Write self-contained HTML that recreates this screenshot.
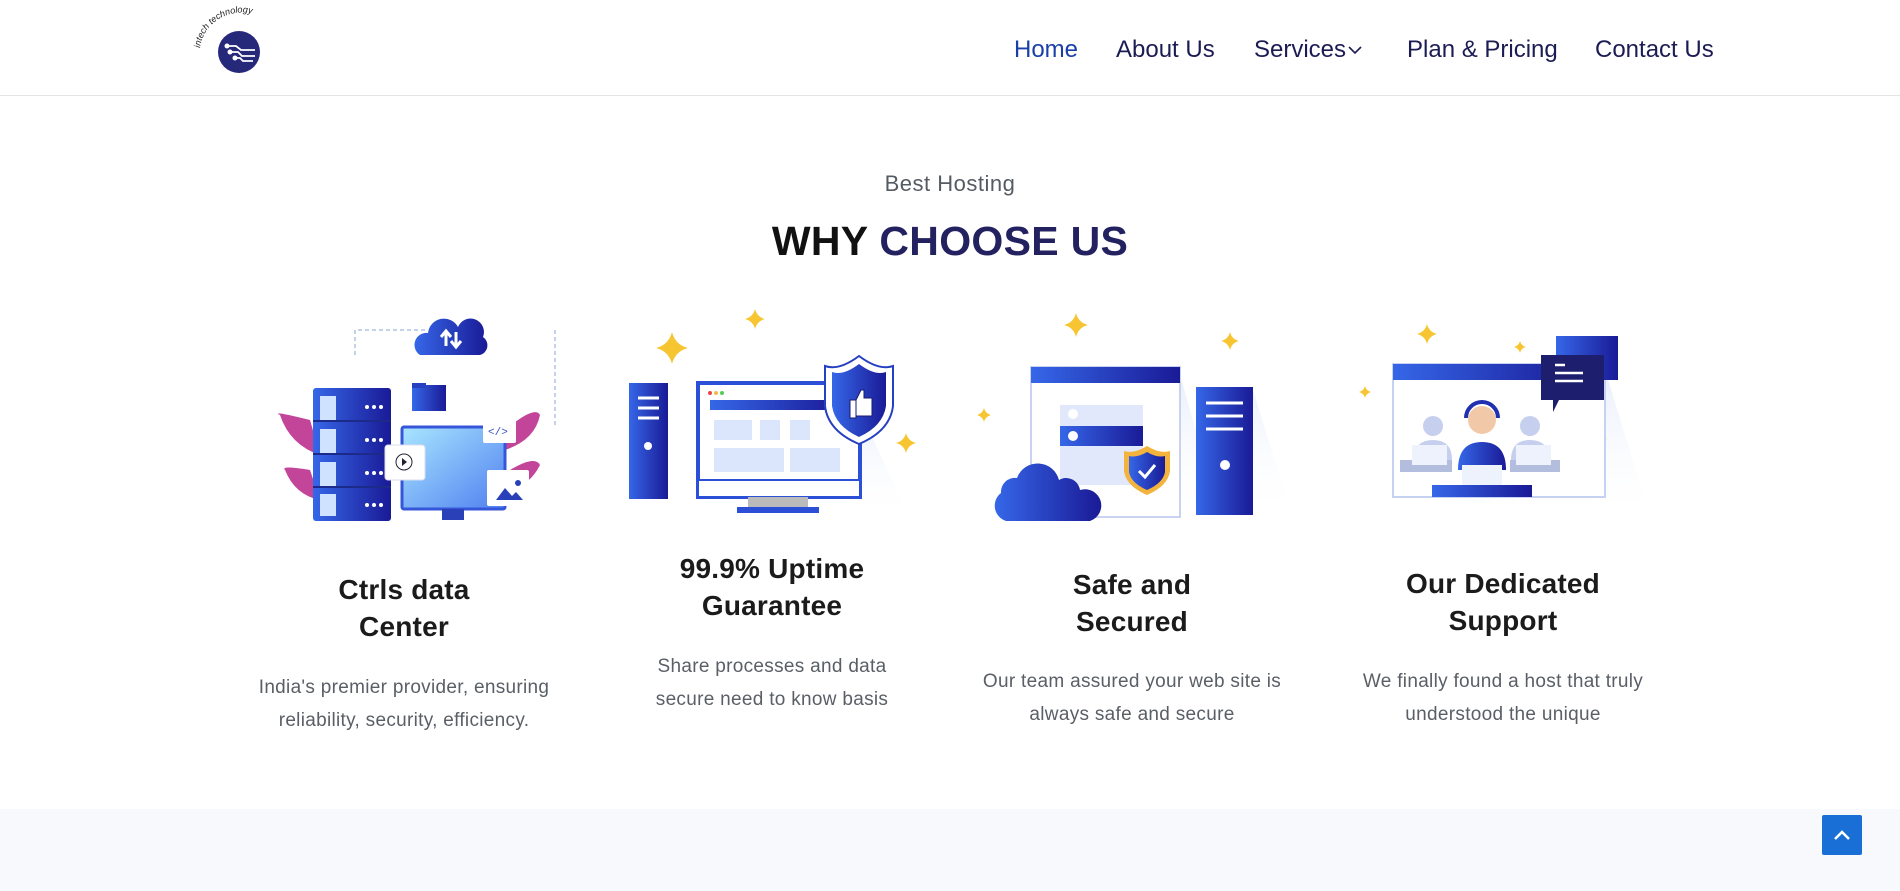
<!DOCTYPE html>
<html><head><meta charset="utf-8"><style>
*{margin:0;padding:0;box-sizing:border-box}
body{width:1900px;height:891px;overflow:hidden;background:#fff;font-family:"Liberation Sans",sans-serif;position:relative}
.hdr{position:absolute;left:0;top:0;width:1900px;height:96px;border-bottom:1px solid #e4e4e4;background:#fff}
.nav a{position:absolute;top:36px;font-size:24px;color:#1c1c54;text-decoration:none;white-space:nowrap}
.t{position:absolute;text-align:center;transform:translateX(-50%);white-space:nowrap}
.h{font-size:28px;font-weight:bold;color:#1b1b1b;line-height:37px;letter-spacing:0.2px}
.d{font-size:19px;color:#5a5f66;line-height:33px;letter-spacing:0.3px}
.bot{position:absolute;left:0;top:809px;width:1900px;height:82px;background:#f8f9fd}
.up{position:absolute;left:1822px;top:815px;width:40px;height:40px;background:#1a6fd6;border-radius:2px}
</style></head><body>
<div class="hdr">
<svg width="120" height="90" style="position:absolute;left:190px;top:5px" viewBox="190 5 120 90">
<defs><path id="arc" d="M200,48 A42,40 0 0 1 280,36"/></defs>
<text font-size="9" font-family="Liberation Sans" font-style="italic" fill="#222"><textPath href="#arc">intech technology</textPath></text>
<circle cx="239" cy="52" r="21" fill="#26287a"/>
<path d="M226,46h10l5,4h14M229,52h9l4,4h13M234,58h6l3,3h10" stroke="#fff" stroke-width="1.8" fill="none"/>
<circle cx="227" cy="46" r="2.5" fill="#fff"/><circle cx="230" cy="52" r="2.5" fill="#fff"/><circle cx="235" cy="58" r="2.5" fill="#fff"/>
</svg>
<div class="nav">
<a style="left:1014px;color:#1a3fa8">Home</a>
<a style="left:1116px">About Us</a>
<a style="left:1254px">Services</a>
<svg style="position:absolute;left:1348px;top:45px" width="14" height="10"><path d="M1,2l6,6l6,-6" stroke="#1c1c54" stroke-width="1.6" fill="none"/></svg>
<a style="left:1407px">Plan &amp; Pricing</a>
<a style="left:1595px">Contact Us</a>
</div>
</div>

<div class="t" style="left:950px;top:171px;font-size:22px;color:#555b62;letter-spacing:0.5px">Best Hosting</div>
<div class="t" style="left:950px;top:218px;font-size:41px;font-weight:bold;color:#111;letter-spacing:0.3px">WHY <span style="color:#23215f">CHOOSE US</span></div>

<svg width="1900" height="891" style="position:absolute;left:0;top:0" viewBox="0 0 1900 891">
<defs>
<linearGradient id="b" x1="0" y1="0" x2="1" y2="0"><stop offset="0" stop-color="#3567e8"/><stop offset="1" stop-color="#1a1a96"/></linearGradient>
<linearGradient id="lb" x1="0" y1="0" x2="1" y2="1"><stop offset="0" stop-color="#a9e6ff"/><stop offset="1" stop-color="#4f7ff0"/></linearGradient>
<linearGradient id="sh" x1="0" y1="0" x2="0" y2="1"><stop offset="0" stop-color="#e8eefc"/><stop offset="1" stop-color="#fff" stop-opacity="0"/></linearGradient>
<path id="star" d="M0,-10 Q2,-2 10,0 Q2,2 0,10 Q-2,2 -10,0 Q-2,-2 0,-10Z" fill="#f7c531"/>
</defs>
<path d="M355,355V330h70M555,330V425" stroke="#8aa4d8" stroke-dasharray="4 3" fill="none"/>
<path d="M310,420q-40,-10 -30,-5q10,30 40,40z" fill="#c2459a"/>
<path d="M310,470q-30,-5 -25,0q10,25 35,30z" fill="#c2459a"/>
<path d="M505,430q30,-25 35,-15q-5,25 -35,35z" fill="#c2459a"/>
<path d="M510,470q25,-15 30,-5q-10,20 -30,25z" fill="#c2459a"/>
<rect x="313" y="388" width="78" height="133" rx="3" fill="url(#b)"/>
<g fill="#cfe2ff"><rect x="320" y="396" width="16" height="25"/><rect x="320" y="429" width="16" height="25"/><rect x="320" y="462" width="16" height="25"/><rect x="320" y="494" width="16" height="22"/></g>
<g stroke="#1c2a8a" stroke-width="2"><path d="M313,421h78M313,454h78M313,487h78"/></g>
<g fill="#fff"><circle cx="367" cy="407" r="2"/><circle cx="374" cy="407" r="2"/><circle cx="381" cy="407" r="2"/><circle cx="367" cy="440" r="2"/><circle cx="374" cy="440" r="2"/><circle cx="381" cy="440" r="2"/><circle cx="367" cy="473" r="2"/><circle cx="374" cy="473" r="2"/><circle cx="381" cy="473" r="2"/><circle cx="367" cy="505" r="2"/><circle cx="374" cy="505" r="2"/><circle cx="381" cy="505" r="2"/></g>
<path d="M420,355a12,12 0 0 1 8,-22a16,16 0 0 1 30,-6a12,12 0 0 1 25,10a10,10 0 0 1 -3,18z" fill="url(#b)"/>
<path d="M446,332v14M441,337l5,-6l5,6M456,346v-14M451,341l5,6l5,-6" stroke="#fff" stroke-width="3" fill="none"/>
<rect x="412" y="385" width="34" height="26" fill="url(#b)"/><rect x="412" y="383" width="14" height="5" fill="#2540c0"/>
<rect x="402" y="427" width="103" height="82" rx="2" fill="url(#lb)" stroke="#3556d8" stroke-width="3"/>
<rect x="442" y="509" width="22" height="11" fill="#2a40b8"/>
<rect x="385" y="445" width="40" height="35" rx="3" fill="#fff" stroke="#dde" /><circle cx="404" cy="462" r="8" fill="none" stroke="#223"/><path d="M402,458l5,4l-5,4z" fill="#223"/>
<rect x="483" y="417" width="33" height="26" rx="2" fill="#fff"/><text x="488" y="435" font-size="11" fill="#3a52c0" font-family="Liberation Mono">&lt;/&gt;</text>
<rect x="487" y="470" width="42" height="36" rx="2" fill="#fff"/><path d="M496,500l9,-12l7,8l4,-4l7,8z" fill="#2a40b8"/><circle cx="518" cy="483" r="3" fill="#2a40b8"/>
<path d="M860,410l50,110h-180z" fill="url(#sh)"/>
<use href="#star" transform="translate(672,348) scale(1.6)"/><use href="#star" transform="translate(755,319) scale(1)"/><use href="#star" transform="translate(906,443) scale(1)"/>
<rect x="629" y="383" width="39" height="116" fill="url(#b)"/>
<g stroke="#fff" stroke-width="3"><path d="M638,398h21M638,408h21M638,418h21"/></g><circle cx="648" cy="446" r="4" fill="#fff"/>
<rect x="698" y="383" width="162" height="114" fill="#fff" stroke="#2c4fd8" stroke-width="4"/>
<rect x="710" y="400" width="130" height="10" fill="url(#b)"/>
<circle cx="710" cy="393" r="2" fill="#e44"/><circle cx="716" cy="393" r="2" fill="#eb4"/><circle cx="722" cy="393" r="2" fill="#5c5"/>
<g fill="#dbe5fb"><rect x="714" y="420" width="38" height="20"/><rect x="760" y="420" width="20" height="20"/><rect x="790" y="420" width="20" height="20"/><rect x="714" y="448" width="70" height="24"/><rect x="790" y="448" width="50" height="24"/></g>
<rect x="698" y="480" width="162" height="17" fill="#fff" stroke="#2c4fd8" stroke-width="2"/>
<rect x="748" y="497" width="60" height="10" fill="#bbb"/><rect x="737" y="507" width="82" height="6" fill="#2c4fd8"/>
<path d="M859,356q20,15 34,10v40q-3,25 -34,38q-31,-13 -34,-38v-40q14,5 34,-10z" fill="#fff" stroke="#2540c0" stroke-width="2"/>
<path d="M859,364q16,12 27,8v34q-3,20 -27,31q-24,-11 -27,-31v-34q11,4 27,-8z" fill="url(#b)"/>
<path d="M850,400h6v18h-6zM856,400l5,-10h3v8h8v18h-16z" fill="#fff" stroke="#1a1a70"/>
<path d="M1180,375l40,140h-40z M1253,390l40,130h-40z" fill="url(#sh)"/>
<use href="#star" transform="translate(1076,325) scale(1.2)"/><use href="#star" transform="translate(1230,341) scale(0.9)"/><use href="#star" transform="translate(984,415) scale(0.7)"/>
<rect x="1031" y="367" width="149" height="150" fill="#fff" stroke="#c9d3ef" stroke-width="2"/>
<rect x="1031" y="367" width="149" height="16" fill="url(#b)"/>
<rect x="1060" y="405" width="83" height="80" fill="#e1e8fb"/>
<rect x="1060" y="426" width="83" height="20" fill="url(#b)"/>
<circle cx="1073" cy="414" r="5" fill="#fff"/><circle cx="1073" cy="436" r="5" fill="#fff"/>
<rect x="1196" y="387" width="57" height="128" fill="url(#b)"/>
<g stroke="#fff" stroke-width="3"><path d="M1206,403h37M1206,416h37M1206,429h37"/></g><circle cx="1225" cy="465" r="5" fill="#fff"/>
<path d="M1147,446q13,8 23,5v20q-2,15 -23,24q-21,-9 -23,-24v-20q10,3 23,-5z" fill="#f3b33d"/>
<path d="M1147,452q10,6 18,4v16q-2,11 -18,18q-16,-7 -18,-18v-16q8,2 18,-4z" fill="url(#b)"/>
<path d="M1139,471l6,6l10,-12" stroke="#fff" stroke-width="3" fill="none"/>
<path d="M1006,521a16,16 0 0 1 -5,-28a14,14 0 0 1 16,-15a22,22 0 0 1 42,2a14,14 0 0 1 21,10a16,16 0 0 1 10,31z" fill="url(#b)"/>
<path d="M1605,370l40,130h-40zM1440,497h150l10,30h-140z" fill="url(#sh)"/>
<use href="#star" transform="translate(1427,334) scale(1)"/><use href="#star" transform="translate(1520,347) scale(0.6)"/><use href="#star" transform="translate(1365,392) scale(0.6)"/><use href="#star" transform="translate(1600,439) scale(0.7)"/>
<rect x="1393" y="364" width="212" height="133" fill="#fff" stroke="#c5d2f2" stroke-width="2"/>
<rect x="1393" y="364" width="190" height="16" fill="url(#b)"/>
<rect x="1556" y="336" width="62" height="44" fill="url(#b)"/>
<path d="M1541,355h63v45h-45l-6,12v-12h-12z" fill="#1d1f6e"/>
<g stroke="#fff" stroke-width="2.5"><path d="M1555,365h10M1555,373h28M1555,381h28"/></g>
<g fill="#c6d0ee"><circle cx="1433" cy="426" r="10"/><circle cx="1530" cy="426" r="10"/><path d="M1414,460q0,-20 19,-20q19,0 19,20zM1511,460q0,-20 19,-20q19,0 19,20z"/></g>
<rect x="1400" y="460" width="52" height="12" fill="#b3bedf"/><rect x="1510" y="460" width="50" height="12" fill="#b3bedf"/>
<rect x="1412" y="445" width="35" height="20" fill="#eef2fc"/><rect x="1516" y="445" width="35" height="20" fill="#eef2fc"/>
<circle cx="1482" cy="420" r="14" fill="#f2c9a8"/><path d="M1466,418a16,16 0 0 1 32,0" stroke="#2030b0" stroke-width="4" fill="none"/>
<path d="M1458,470q0,-28 24,-28q24,0 24,28z" fill="url(#b)"/>
<rect x="1462" y="465" width="40" height="28" fill="#eef2fc"/>
<rect x="1432" y="485" width="100" height="12" fill="url(#b)"/>
</svg>

<div class="t h" style="left:404px;top:571px">Ctrls data<br>Center</div>
<div class="t d" style="left:404px;top:671px">India's premier provider, ensuring<br>reliability, security, efficiency.</div>
<div class="t h" style="left:772px;top:550px">99.9% Uptime<br>Guarantee</div>
<div class="t d" style="left:772px;top:650px">Share processes and data<br>secure need to know basis</div>
<div class="t h" style="left:1132px;top:566px">Safe and<br>Secured</div>
<div class="t d" style="left:1132px;top:665px">Our team assured your web site is<br>always safe and secure</div>
<div class="t h" style="left:1503px;top:565px">Our Dedicated<br>Support</div>
<div class="t d" style="left:1503px;top:665px">We finally found a host that truly<br>understood the unique</div>

<div class="bot"></div>
<div class="up"><svg width="40" height="40"><path d="M13,24l7,-7l7,7" stroke="#fff" stroke-width="2.5" fill="none"/></svg></div>
</body></html>
